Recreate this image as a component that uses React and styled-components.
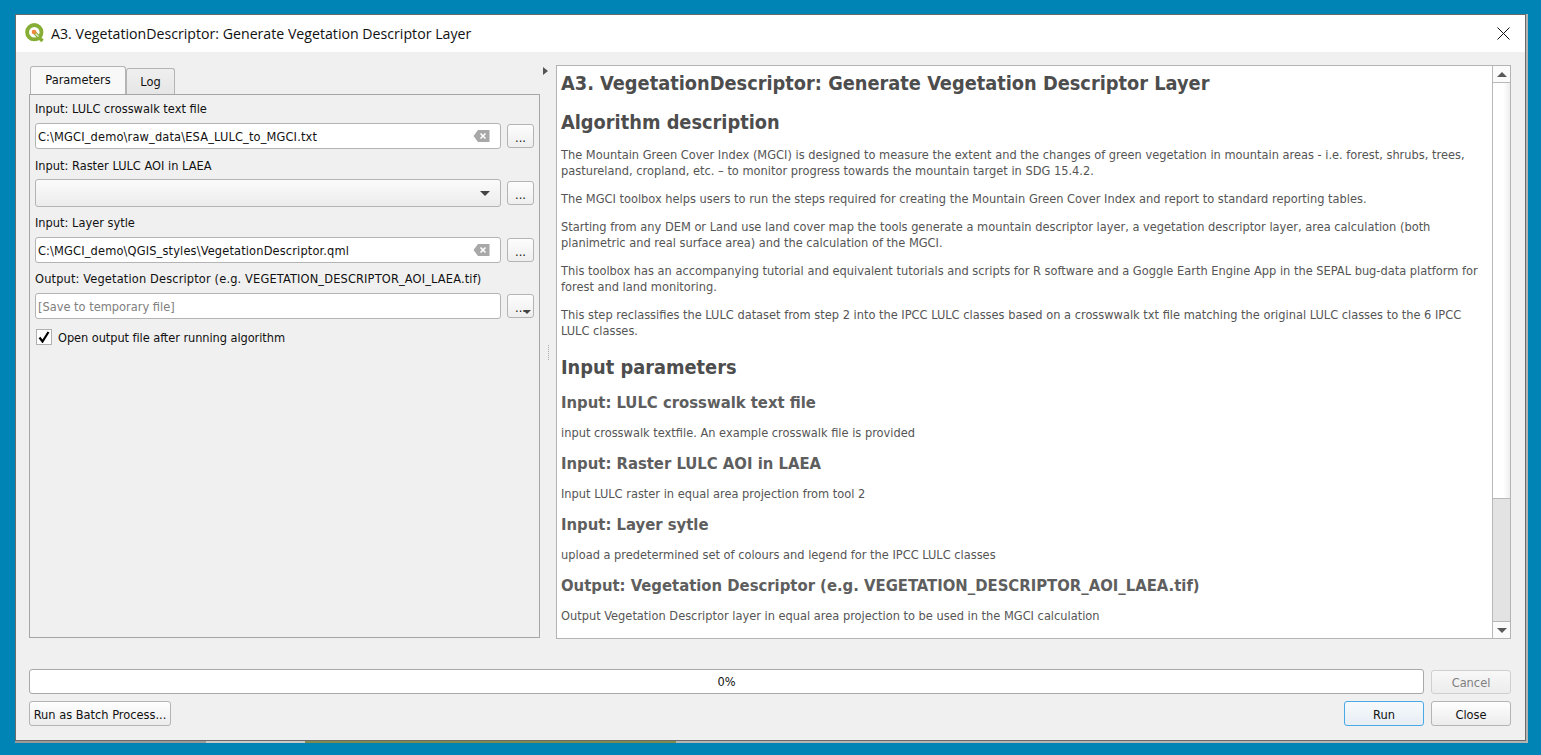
import React from "react";
import styled, { createGlobalStyle } from "styled-components";

const ui = `"DejaVu Sans Condensed", "DejaVu Sans", sans-serif`;

const Global = createGlobalStyle`
  html, body { margin: 0; padding: 0; height: 100%; overflow: hidden; background: #0084b5; }
  * { box-sizing: border-box; }
`;
const Page = styled.div`
  width: 1541px; height: 755px; padding: 14px 0 0 15px; background: #0084b5;
`;
const Frame = styled.div`
  width: 1513px; display: flex; flex-direction: column; border-right: 2px solid #b4b4b4;
`;
const Window = styled.div`
  height: 727px; border: 1px solid #6a6a6a; background: #f0f0f0;
  display: flex; flex-direction: column; font: 12.7px ${ui}; color: #111;
`;
const Strip = styled.div`display: flex; height: 2px; margin-right: -2px;`;
const StripPart = styled.div`
  width: ${p => p.$w}px; flex: ${p => (p.$w ? "none" : 1)}; background: ${p => p.$c};
`;
const TitleBar = styled.div`
  height: 37px; background: #fff; display: flex; align-items: center; padding: 0 15px 0 9px; flex: none;
`;
const TitleText = styled.div`
  font: 14.17px "Open Sans", "Noto Sans", sans-serif; color: #111; margin-left: 6px; flex: 1; white-space: nowrap;
`;
const Logo = styled.svg`width: 20px; height: 20px; flex: none; margin-top: -1px;`;
const CloseX = styled.svg`width: 13px; height: 13px; flex: none;`;

const Body = styled.div`
  flex: 1; display: flex; flex-direction: column; padding: 13px 14px 14px 13px; min-height: 0;
`;
const Split = styled.div`display: flex; height: 575px; flex: none;`;
const Left = styled.div`width: 511px; flex: none; display: flex; flex-direction: column; padding-top: 1px;`;
const Tabs = styled.div`display: flex; align-items: flex-end; height: 28px; padding-left: 1px;`;
const Tab = styled.div`
  height: ${p => (p.$on ? 28 : 26)}px; width: ${p => p.$w}px; border: 1px solid #b4b4b4; border-bottom: 0;
  border-radius: 3px 3px 0 0;
  background: ${p => (p.$on ? "#f8f8f8" : "linear-gradient(#efefef,#e6e6e6)")};
  display: flex; align-items: center; justify-content: center; padding-bottom: ${p => (p.$on ? 2 : 0)}px;
`;
const Panel = styled.div`
  height: 544px; border: 1px solid #a6a6a6; padding: 5px 5px 0 5px; display: flex; flex-direction: column;
`;
const Label = styled.div`
  height: 18px; line-height: 18px; white-space: nowrap; color: #111;
  letter-spacing: ${p => (p.$wide ? "0.15px" : "0")};
`;
const Row = styled.div`
  display: flex; align-items: center; gap: 6px; height: 28px; margin: 4px 0 ${p => p.$after ?? 7}px;
`;
const Field = styled.div`
  flex: 1; height: ${p => (p.$combo ? 28 : 26)}px; background: ${p => (p.$combo ? "linear-gradient(#fbfbfb,#ececec)" : "#fff")};
  border: 1px solid #b4b4b4; border-radius: 3px; display: flex; align-items: center; padding: 0 10px 0 2px;
  color: ${p => (p.$ph ? "#808080" : "#111")}; white-space: nowrap;
`;
const FieldText = styled.span`flex: 1; letter-spacing: 0.15px;`;
const Browse = styled.div`
  position: relative; width: 27px; height: 24px; flex: none; border: 1px solid #b4b4b4; border-radius: 3px;
  background: linear-gradient(#fdfdfd,#eeeeee); display: flex; align-items: center; justify-content: center;
  padding-top: 2px;
`;
const MenuCaret = styled.span`
  position: absolute; right: 2px; bottom: 3px; width: 0; height: 0;
  border-left: 4px solid transparent; border-right: 4px solid transparent; border-top: 4px solid #444;
`;
const ComboCaret = styled.span`
  width: 0; height: 0; border-left: 5px solid transparent; border-right: 5px solid transparent; border-top: 5px solid #444;
`;
const CheckRow = styled.div`display: flex; align-items: center; gap: 6px; height: 18px; margin-top: 1px; padding-left: 1px; letter-spacing: -0.07px;`;
const CheckBox = styled.div`
  width: 16px; height: 16px; border: 1px solid #b0b0b0; background: #fff; display: flex; align-items: center; justify-content: center;
`;
const Gutter = styled.div`
  width: 16px; flex: none; display: flex; flex-direction: column; align-items: flex-start; padding-left: 3px;
`;
const ArrowRight = styled.span`
  margin: 2px 0 0 0; width: 0; height: 0; border-top: 4.5px solid transparent; border-bottom: 4.5px solid transparent;
  border-left: 5px solid #555;
`;
const Dots = styled.span`
  margin-top: 270px; margin-left: 5px; width: 1px; height: 15px;
  background: repeating-linear-gradient(#aaa 0 1px, transparent 1px 2px);
`;
const Right = styled.div`
  flex: 1; border: 1px solid #b4b4b4; background: #fff; display: flex; min-width: 0; height: 574px;
`;
const Doc = styled.div`flex: 1; padding: 5px 4px 0 4px; overflow: hidden; color: #555; white-space: nowrap; background: #fff;`;
const H1 = styled.div`font: bold 19.8px/26px ${ui}; color: #4d4d4d; margin-bottom: 13px;`;
const H2 = styled.div`
  font: bold 19.8px/26px ${ui}; color: #4d4d4d; margin: ${p => p.$top || 0}px 0 11px;
`;
const H3 = styled.div`font: bold 16.5px/22px ${ui}; color: #5e5e5e; margin: 0 0 11px;`;
const P = styled.p`margin: 0 0 12px; font: 12.7px/16px ${ui}; color: #555;`;
const Scroll = styled.div`
  width: 18px; flex: none; border-left: 1px solid #b8b8b8; display: flex; flex-direction: column; background: #e3e3e3;
`;
const ScrollBtn = styled.div`
  height: 17px; flex: none; background: #fbfbfb; display: flex; align-items: center; justify-content: center;
  border-${p => (p.$up ? "bottom" : "top")}: 1px solid #b8b8b8;
`;
const Thumb = styled.div`
  height: 416px; flex: none; background: linear-gradient(90deg,#fff 60%,#eeeeee); border-bottom: 1px solid #b8b8b8;
`;
const Track = styled.div`flex: 1;`;
const Tri = styled.span`
  width: 0; height: 0; border-left: 5px solid transparent; border-right: 5px solid transparent;
  border-${p => (p.$up ? "bottom" : "top")}: 5px solid #5a5a5a;
`;
const ProgressRow = styled.div`display: flex; gap: 7px; margin-top: 30px; height: 24px; align-items: flex-start;`;
const Progress = styled.div`
  flex: 1; height: 25px; margin-top: -1px; border: 1px solid #a8a8a8; border-radius: 3px; background: #fff;
  display: flex; align-items: center; justify-content: center;
`;
const Btn = styled.div`
  width: ${p => p.$w}px; height: ${p => p.$h || 25}px; flex: none; border: 1px solid ${p => (p.$focus ? "#49a9e6" : p.$off ? "#cfcfcf" : "#b4b4b4")};
  border-radius: 3px; display: flex; align-items: center; justify-content: center; white-space: nowrap; padding-top: 1px;
  color: ${p => (p.$off ? "#808080" : "#111")};
  background: ${p => (p.$focus ? "linear-gradient(#f6fafd,#e6edf3)" : p.$off ? "linear-gradient(#f8f8f8,#ececec)" : "linear-gradient(#fefefe,#ececec)")};
`;
const ActionRow = styled.div`display: flex; gap: 7px; margin-top: 7px; align-items: center;`;
const Spacer = styled.div`flex: 1;`;

const intro = [
  ["The Mountain Green Cover Index (MGCI) is designed to measure the extent and the changes of green vegetation in mountain areas - i.e. forest, shrubs, trees,", "pastureland, cropland, etc. – to monitor progress towards the mountain target in SDG 15.4.2."],
  ["The MGCI toolbox helps users to run the steps required for creating the Mountain Green Cover Index and report to standard reporting tables."],
  ["Starting from any DEM or Land use land cover map the tools generate a mountain descriptor layer, a vegetation descriptor layer, area calculation (both", "planimetric and real surface area) and the calculation of the MGCI."],
  ["This toolbox has an accompanying tutorial and equivalent tutorials and scripts for R software and a Goggle Earth Engine App in the SEPAL bug-data platform for", "forest and land monitoring."],
  ["This step reclassifies the LULC dataset from step 2 into the IPCC LULC classes based on a crosswwalk txt file matching the original LULC classes to the 6 IPCC", "LULC classes."],
];
const params = [
  ["Input: LULC crosswalk text file", "input crosswalk textfile. An example crosswalk file is provided"],
  ["Input: Raster LULC AOI in LAEA", "Input LULC raster in equal area projection from tool 2"],
  ["Input: Layer sytle", "upload a predetermined set of colours and legend for the IPCC LULC classes"],
  ["Output: Vegetation Descriptor (e.g. VEGETATION_DESCRIPTOR_AOI_LAEA.tif)", "Output Vegetation Descriptor layer in equal area projection to be used in the MGCI calculation"],
];

const ClearIcon = () => (
  <svg width="17" height="14" viewBox="0 0 17 14">
    <path d="M0.5 7 L5 1 H16.5 V13 H5 Z" fill="#a8a8a8" />
    <path d="M7.5 4.5 L12.5 9.5 M12.5 4.5 L7.5 9.5" stroke="#fff" strokeWidth="1.6" />
  </svg>
);

export default function App() {
  return (
    <Page>
      <Global />
      <Frame>
        <Window>
          <TitleBar>
            <Logo viewBox="0 0 20 20">
              <circle cx="9.3" cy="9.2" r="7.2" fill="none" stroke="#86ae34" strokeWidth="3.8" />
              <path d="M9 9 L17.5 18" stroke="#86ae34" strokeWidth="3.4" />
              <path d="M10.5 10.5 L13.5 13.8" stroke="#dfe8c8" strokeWidth="1.4" />
              <circle cx="9" cy="9" r="2.3" fill="#ee8a3c" />
            </Logo>
            <TitleText>A3. VegetationDescriptor: Generate Vegetation Descriptor Layer</TitleText>
            <CloseX viewBox="0 0 13 13">
              <path d="M0.5 0.5 L12.5 12.5 M12.5 0.5 L0.5 12.5" stroke="#111" strokeWidth="1" fill="none" />
            </CloseX>
          </TitleBar>
          <Body>
            <Split>
              <Left>
                <Tabs>
                  <Tab $on $w={96}>Parameters</Tab>
                  <Tab $w={49}>Log</Tab>
                </Tabs>
                <Panel>
                  <Label>Input: LULC crosswalk text file</Label>
                  <Row>
                    <Field><FieldText>C:\MGCI_demo\raw_data\ESA_LULC_to_MGCI.txt</FieldText><ClearIcon /></Field>
                    <Browse>...</Browse>
                  </Row>
                  <Label>Input: Raster LULC AOI in LAEA</Label>
                  <Row>
                    <Field $combo><FieldText /><ComboCaret /></Field>
                    <Browse>...</Browse>
                  </Row>
                  <Label>Input: Layer sytle</Label>
                  <Row $after={6}>
                    <Field><FieldText>C:\MGCI_demo\QGIS_styles\VegetationDescriptor.qml</FieldText><ClearIcon /></Field>
                    <Browse>...</Browse>
                  </Row>
                  <Label $wide>Output: Vegetation Descriptor (e.g. VEGETATION_DESCRIPTOR_AOI_LAEA.tif)</Label>
                  <Row>
                    <Field $ph>[Save to temporary file]</Field>
                    <Browse>...<MenuCaret /></Browse>
                  </Row>
                  <CheckRow>
                    <CheckBox>
                      <svg width="12" height="12" viewBox="0 0 12 12">
                        <path d="M1.5 6.5 L4.5 10.5 L10.5 1" fill="none" stroke="#000" strokeWidth="2.2" />
                      </svg>
                    </CheckBox>
                    Open output file after running algorithm
                  </CheckRow>
                </Panel>
              </Left>
              <Gutter>
                <ArrowRight />
                <Dots />
              </Gutter>
              <Right>
                <Doc>
                  <H1>A3. VegetationDescriptor: Generate Vegetation Descriptor Layer</H1>
                  <H2>Algorithm description</H2>
                  {intro.map((lines, i) => (
                    <P key={i}>{lines.map((l, j) => <React.Fragment key={j}>{j > 0 && <br />}{l}</React.Fragment>)}</P>
                  ))}
                  <H2 $top={16}>Input parameters</H2>
                  {params.map(([h, t]) => (
                    <React.Fragment key={h}>
                      <H3>{h}</H3>
                      <P>{t}</P>
                    </React.Fragment>
                  ))}
                </Doc>
                <Scroll>
                  <ScrollBtn $up><Tri $up /></ScrollBtn>
                  <Thumb />
                  <Track />
                  <ScrollBtn><Tri /></ScrollBtn>
                </Scroll>
              </Right>
            </Split>
            <ProgressRow>
              <Progress>0%</Progress>
              <Btn $w={80} $h={24} $off>Cancel</Btn>
            </ProgressRow>
            <ActionRow>
              <Btn $w={142}>Run as Batch Process...</Btn>
              <Spacer />
              <Btn $w={80} $focus>Run</Btn>
              <Btn $w={80}>Close</Btn>
            </ActionRow>
          </Body>
        </Window>
        <Strip>
          <StripPart $w={191} $c="#9a9a9a" />
          <StripPart $w={99} $c="#c9c9c9" />
          <StripPart $w={371} $c="#7f8a4e" />
          <StripPart $c="#b4b4b4" />
        </Strip>
      </Frame>
    </Page>
  );
}
